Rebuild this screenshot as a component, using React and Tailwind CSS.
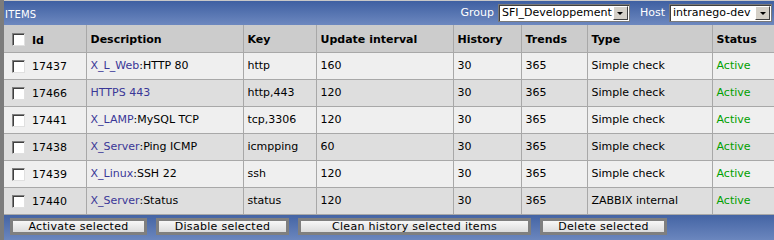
import React from 'react';

const COLS = [
  { label: 'Id', w: 'w-[82px]' },
  { label: 'Description', w: 'w-[157px]' },
  { label: 'Key', w: 'w-[73px]' },
  { label: 'Update interval', w: 'w-[137px]' },
  { label: 'History', w: 'w-[68px]' },
  { label: 'Trends', w: 'w-[66px]' },
  { label: 'Type', w: 'w-[125px]' },
  { label: 'Status', w: 'w-[62px]' },
];

const ROWS = [
  { id: 17437, host: 'X_L_Web', name: 'HTTP 80', key: 'http', delay: 160, history: 30, trends: 365, type: 'Simple check' },
  { id: 17466, host: null, name: 'HTTPS 443', key: 'http,443', delay: 120, history: 30, trends: 365, type: 'Simple check' },
  { id: 17441, host: 'X_LAMP', name: 'MySQL TCP', key: 'tcp,3306', delay: 120, history: 30, trends: 365, type: 'Simple check' },
  { id: 17438, host: 'X_Server', name: 'Ping ICMP', key: 'icmpping', delay: 60, history: 30, trends: 365, type: 'Simple check' },
  { id: 17439, host: 'X_Linux', name: 'SSH 22', key: 'ssh', delay: 120, history: 30, trends: 365, type: 'Simple check' },
  { id: 17440, host: 'X_Server', name: 'Status', key: 'status', delay: 120, history: 30, trends: 365, type: 'ZABBIX internal' },
];

const BUTTONS = [
  { label: 'Activate selected', w: 'w-[137px]' },
  { label: 'Disable selected', w: 'w-[133px]' },
  { label: 'Clean history selected items', w: 'w-[233px]' },
  { label: 'Delete selected', w: 'w-[127px]' },
];

const Check = () => (
  <span className="inline-block w-[13px] h-[13px] bg-white border border-t-[#808080] border-l-[#808080] border-r-[#e0e0e0] border-b-[#e0e0e0] shadow-[inset_1px_1px_0_#404040] align-middle" />
);

const Select = ({ value, w }) => (
  <div className={`flex items-center h-[18px] bg-white border border-[#7a7a7a] shadow-[inset_1px_1px_0_#404040] ${w}`}>
    <span className="flex-1 pl-[3px] text-black leading-[16px] truncate">{value}</span>
    <span className="flex items-center justify-center w-[15px] h-[14px] mr-[1px] bg-[#d4d0c8] border border-t-white border-l-white border-r-[#404040] border-b-[#404040]">
      <span className="w-0 h-0 border-l-[3px] border-r-[3px] border-t-[3px] border-l-transparent border-r-transparent border-t-black" />
    </span>
  </div>
);

export default function App() {
  return (
    <div className="w-[774px] h-[240px] overflow-hidden bg-white border-l-4 border-[#7c7c7c] text-[11px] font-['DejaVu_Sans','Verdana',sans-serif] text-black">
      <div className="flex items-center h-[25px] pl-[1px] pr-[2px] border-t border-[#c8c8c8] bg-gradient-to-b from-[#3f60a2] to-[#6d88bf] text-white">
        <span className="text-[10px] tracking-[0.2px] pt-[3px]">ITEMS</span>
        <div className="ml-auto flex items-center">
          <span className="mr-[4px] pt-[1px]">Group</span>
          <Select value="SFI_Developpement" w="w-[132px]" />
          <span className="ml-[10px] mr-[4px] pt-[1px]">Host</span>
          <Select value="intranego-dev" w="w-[103px]" />
        </div>
      </div>

      <table className="table-fixed border-collapse w-[770px]">
        <thead>
          <tr className="h-[27px] bg-[#cccccc]">
            {COLS.map((c, i) => (
              <th
                key={c.label}
                className={`${c.w} font-bold text-left px-[4px] pt-[3px] border-l border-b border-[#a8a8a8] first:border-l-0`}
              >
                {i === 0 ? (
                  <span className="flex items-center gap-[7px] pl-[4px]">
                    <Check />
                    <span className="pt-[2px]">{c.label}</span>
                  </span>
                ) : (
                  c.label
                )}
              </th>
            ))}
          </tr>
        </thead>
        <tbody>
          {ROWS.map((r, idx) => (
            <tr key={r.id} className={`h-[27px] ${idx % 2 === 0 ? 'bg-[#efefef]' : 'bg-[#dedede]'}`}>
              <td className="px-[4px] pt-[1px] border-b border-[#a8a8a8]">
                <span className="flex items-center gap-[7px] pl-[4px]">
                  <Check />
                  <span className="pt-[2px]">{r.id}</span>
                </span>
              </td>
              <td className="px-[4px] pt-[2px] border-l border-b border-[#a8a8a8] whitespace-nowrap">
                {r.host ? (
                  <>
                    <span className="text-[#3a3797]">{r.host}</span>:{r.name}
                  </>
                ) : (
                  <span className="text-[#3a3797]">{r.name}</span>
                )}
              </td>
              <td className="px-[4px] pt-[2px] border-l border-b border-[#a8a8a8]">{r.key}</td>
              <td className="px-[4px] pt-[2px] border-l border-b border-[#a8a8a8]">{r.delay}</td>
              <td className="px-[4px] pt-[2px] border-l border-b border-[#a8a8a8]">{r.history}</td>
              <td className="px-[4px] pt-[2px] border-l border-b border-[#a8a8a8]">{r.trends}</td>
              <td className="px-[4px] pt-[2px] border-l border-b border-[#a8a8a8]">{r.type}</td>
              <td className="px-[4px] pt-[2px] border-l border-b border-[#a8a8a8] text-[#00a000]">Active</td>
            </tr>
          ))}
        </tbody>
      </table>

      <div className="flex items-start gap-[9px] h-[26px] pt-[3px] pl-[6px] bg-gradient-to-b from-[#4464a4] to-[#6d88bf]">
        {BUTTONS.map((b) => (
          <button
            key={b.label}
            className={`${b.w} h-[17px] border-[3px] border-[#7f7f7f] bg-gradient-to-b from-[#f7f7f7] to-[#dcdcdc] text-black text-[11px] leading-none tracking-[0.3px]`}
          >
            {b.label}
          </button>
        ))}
      </div>
    </div>
  );
}
